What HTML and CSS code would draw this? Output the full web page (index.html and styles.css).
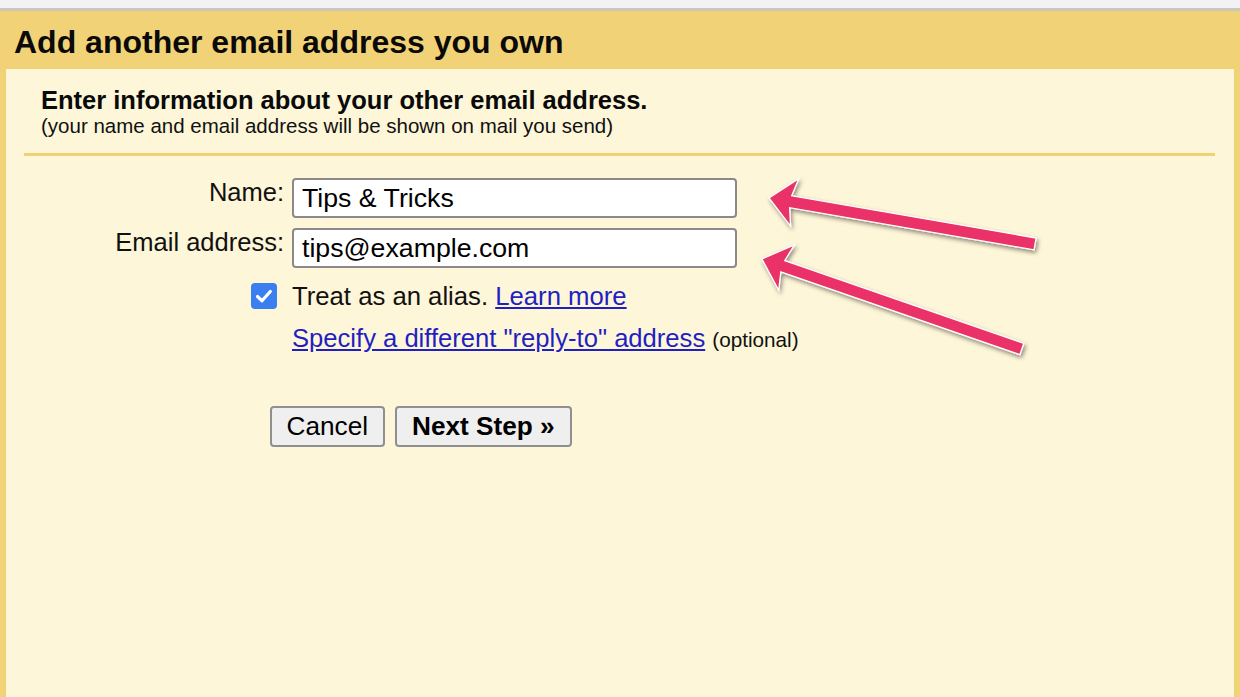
FILE: index.html
```html
<!DOCTYPE html>
<html lang="en">
<head>
<meta charset="utf-8">
<title>Add another email address you own</title>
<link rel="stylesheet" href="styles.css">
</head>
<body>
<div class="page">
  <div class="topbar"></div>
  <div class="header"><h1 class="title">Add another email address you own</h1></div>
  <div class="panel">
    <div class="intro">
      <h2 class="intro-head">Enter information about your other email address.</h2>
      <p class="intro-sub">(your name and email address will be shown on mail you send)</p>
    </div>
    <hr class="sep">
    <form class="form">
      <label class="lbl" for="name">Name:</label>
      <input class="field" id="name" type="text" value="Tips &amp; Tricks">
      <label class="lbl" for="email">Email address:</label>
      <input class="field" id="email" type="text" value="tips@example.com">
      <div class="cb-cell"><span class="cb"><svg viewBox="0 0 26 26" width="26" height="26"><path d="M6.5 13.5 L11 17.8 L19.3 8.5" fill="none" stroke="#fff" stroke-width="3.2" stroke-linecap="round" stroke-linejoin="round"/></svg></span></div>
      <div class="alias">Treat as an alias. <a href="#" class="link">Learn more</a></div>
      <div></div>
      <div class="replyto"><a href="#" class="link">Specify a different "reply-to" address</a> <span class="opt">(optional)</span></div>
      <div class="buttons">
        <button type="button" class="btn">Cancel</button>
        <button type="button" class="btn btn-bold">Next Step »</button>
      </div>
    </form>
    <svg class="arrows" width="1240" height="697" viewBox="0 0 1240 697">
      <defs>
        <filter id="sh" x="-20%" y="-50%" width="140%" height="200%">
          <feDropShadow dx="1.5" dy="2.5" stdDeviation="2" flood-color="#000" flood-opacity="0.45"/>
        </filter>
      </defs>
      <g filter="url(#sh)" fill="#ea3367" stroke="#fff" stroke-width="1.3" stroke-linejoin="miter">
        <g transform="translate(769,198) rotate(9.8)">
          <polygon points="0,0 26,-24 22,-6 270,-6 270,6 22,6 26,24"/>
        </g>
        <g transform="translate(762,259) rotate(19.1)">
          <polygon points="0,0 26,-24 22,-6 275,-6 275,6 22,6 26,24"/>
        </g>
      </g>
    </svg>
  </div>
</div>
</body>
</html>
```

FILE: styles.css
```css
* { box-sizing: border-box; }
html, body { margin: 0; padding: 0; }
body {
  font-family: "Liberation Sans", Arial, Helvetica, sans-serif;
  color: #000;
  background: #fef6d8;
  width: 1240px;
  height: 697px;
  overflow: hidden;
}
.page {
  width: 1240px;
  height: 697px;
  display: flex;
  flex-direction: column;
}
.topbar {
  height: 11px;
  background: #f2f2f5;
  border-bottom: 3px solid #c9c7bd;
  flex: none;
}
.header {
  background: #f2d277;
  height: 58px;
  flex: none;
  padding: 14px 0 0 14px;
}
.title {
  margin: 0;
  font-size: 32px;
  line-height: 34px;
  font-weight: bold;
  color: #0a0a0a;
}
.panel {
  position: relative;
  flex: 1;
  background: #fef6d8;
  border-left: 6px solid #f2d277;
  border-right: 6px solid #f2d277;
}
.intro { padding: 17px 0 0 35px; }
.intro-head {
  margin: 0;
  font-size: 25.5px;
  line-height: 28px;
  font-weight: bold;
  color: #0a0a0a;
}
.intro-sub {
  margin: 0;
  font-size: 20.5px;
  line-height: 24px;
  color: #111;
}
.sep {
  margin: 15px 19px 0 18px;
  border: 0;
  height: 3px;
  background: #f0d176;
}
.form {
  display: grid;
  grid-template-columns: 278px 445px;
  column-gap: 8px;
  margin-top: 22px;
  align-items: center;
}
.lbl {
  text-align: right;
  font-size: 25.5px;
  line-height: 28px;
  align-self: start;
  padding-top: 0;
  color: #111;
}
.field {
  width: 445px;
  height: 40px;
  border: 2px solid #8a8a8a;
  border-radius: 4px;
  background: #fff;
  font-family: inherit;
  font-size: 26.7px;
  padding: 0 0 0 8px;
  color: #000;
  margin-bottom: 10px;
}
.cb-cell {
  display: flex;
  justify-content: flex-end;
  padding-right: 7px;
}
.cb {
  display: block;
  width: 26px;
  height: 26px;
  border-radius: 4px;
  background: #3a7ff0;
}
.cb svg { display: block; }
.alias {
  font-size: 25.7px;
  line-height: 36px;
  color: #111;
  white-space: nowrap;
}
.link {
  color: #1f1fc4;
  text-decoration: underline;
}
.replyto {
  grid-column: 2;
  font-size: 25.6px;
  line-height: 30px;
  margin-top: 9px;
  white-space: nowrap;
  color: #111;
}
.opt { font-size: 20.7px; }
.buttons {
  grid-column: 1 / 3;
  display: flex;
  gap: 10px;
  padding-left: 264px;
  margin-top: 51px;
}
.btn {
  height: 41px;
  border: 2px solid #8f8f8f;
  border-radius: 4px;
  background: #efefef;
  font-family: inherit;
  font-size: 26.2px;
  color: #000;
  padding: 0 14.5px;
}
.btn-bold { font-weight: bold; padding: 0 15.5px; }
.arrows {
  position: absolute;
  left: -6px;
  top: -69px;
  pointer-events: none;
}
```
